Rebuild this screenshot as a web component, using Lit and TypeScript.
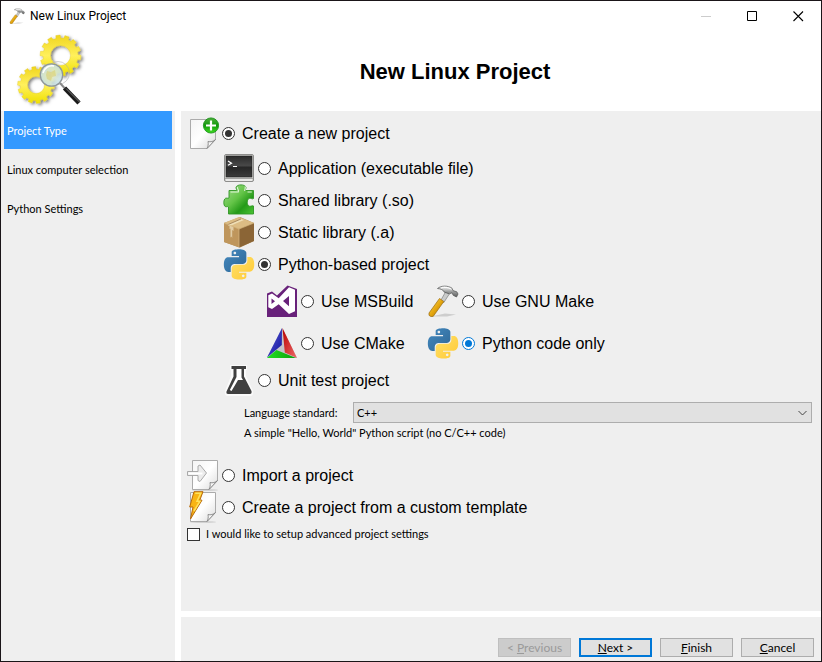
import { LitElement, html, css, svg, nothing } from "lit";
import { customElement, state } from "lit/decorators.js";

type Option = { value: string; label: string; icon: string };

const KINDS: Option[] = [
  { value: "app", label: "Application (executable file)", icon: "terminal" },
  { value: "so", label: "Shared library (.so)", icon: "puzzle" },
  { value: "a", label: "Static library (.a)", icon: "box" },
  { value: "python", label: "Python-based project", icon: "python" },
];

const BUILDS: Option[] = [
  { value: "msbuild", label: "Use MSBuild", icon: "vs" },
  { value: "make", label: "Use GNU Make", icon: "hammer" },
  { value: "cmake", label: "Use CMake", icon: "cmake" },
  { value: "none", label: "Python code only", icon: "python" },
];

const PAGES = ["Project Type", "Linux computer selection", "Python Settings"];

/* Outline of a toothed wheel around (cx, cy). */
function gear(cx: number, cy: number, outer: number, root: number, hole: number, teeth: number) {
  const step = (Math.PI * 2) / teeth;
  const pts: string[] = [];
  for (let i = 0; i < teeth; i++) {
    const a = i * step + 0.1;
    for (const [r, o] of [[root, -0.32], [outer, -0.24], [outer, 0.24], [root, 0.32]]) {
      pts.push(`${(cx + r * Math.cos(a + o * step)).toFixed(2)} ${(cy + r * Math.sin(a + o * step)).toFixed(2)}`);
    }
  }
  return `M${pts.join("L")}ZM${cx - hole} ${cy}a${hole} ${hole} 0 1 0 ${hole * 2} 0a${hole} ${hole} 0 1 0 ${-hole * 2} 0Z`;
}

const SNAKE =
  "M14.25.18l.9.2.73.26.59.3.45.32.34.34.25.34.16.33.1.3.04.26.02.2-.01.13V8.5l-.05.63-.13.55-.21.46-.26.38-.3.31-.33.25-.35.19-.35.14-.33.1-.3.07-.26.04-.21.02H8.77l-.69.05-.59.14-.5.22-.41.27-.33.32-.27.35-.2.36-.15.37-.1.35-.07.32-.04.27-.02.21v3.06H3.17l-.21-.03-.28-.07-.32-.12-.35-.18-.36-.26-.36-.36-.35-.46-.32-.59-.28-.73-.21-.88-.14-1.05-.05-1.23.06-1.22.16-1.04.24-.87.32-.71.36-.57.4-.44.42-.33.42-.24.4-.16.36-.1.32-.05.24-.01h.16l.06.01h8.16v-.83H6.18l-.01-2.75-.02-.37.05-.34.11-.31.17-.28.25-.26.31-.23.38-.2.44-.18.51-.15.58-.12.64-.1.71-.06.77-.04.84-.02 1.27.05zm-6.3 1.98l-.23.33-.08.41.08.41.23.34.33.22.41.09.41-.09.33-.22.23-.34.08-.41-.08-.41-.23-.33-.33-.22-.41-.09-.41.09z";

const sheet = (x: number) => svg`
  <defs><linearGradient id="paper" x1="0" y1="0" x2="1" y2="1">
    <stop offset="0" stop-color="#f4f4f4"/><stop offset=".5" stop-color="#fff"/><stop offset="1" stop-color="#dcdcdc"/>
  </linearGradient></defs>
  <ellipse cx="${x + 13}" cy="31" rx="13" ry="1" fill="#000" opacity=".12"/>
  <path d="M${x + 0.5} 1.5h25v20l-8.500 9h-16.500z" fill="url(#paper)" stroke="#ababab"/>
  <path d="M${x + 25.5} 21.500l-8.500 9c1.200-2.200 1.500-4.500 1-7c2.500.8 5.500 0 7.500-2z" fill="#f6f6f6" stroke="#858585" stroke-width=".9"/>`;

const ICONS: Record<string, unknown> = {
  create: svg`
    <defs><linearGradient id="paper0" x1="0" y1="0" x2="1" y2="1"><stop offset="0" stop-color="#f4f4f4"/><stop offset=".5" stop-color="#fff"/><stop offset="1" stop-color="#d8d8d8"/></linearGradient>
    <linearGradient id="plus" x1="0" y1="0" x2="0" y2="1"><stop offset="0" stop-color="#4fae3c"/><stop offset=".5" stop-color="#119a0b"/><stop offset="1" stop-color="#3fdc1f"/></linearGradient></defs>
    <path d="M3.500 2.500h25v20l-8.500 9h-16.500z" fill="url(#paper0)" stroke="#ababab"/>
    <path d="M28.500 22.500l-8.500 9c1.200-2.200 1.500-4.500 1-7c2.500.8 5.500 0 7.500-2z" fill="#f6f6f6" stroke="#858585" stroke-width=".9"/>
    <circle cx="24" cy="8.500" r="7.600" fill="url(#plus)" stroke="#0c8a0c" stroke-width=".8"/>
    <path d="M24 3.500v10M19 8.500h10" stroke="#fff" stroke-width="2.200"/>`,
  terminal: svg`<defs><linearGradient id="scr" x1="0" y1="0" x2="0" y2="1"><stop offset="0" stop-color="#2b2b2b"/><stop offset=".45" stop-color="#484848"/><stop offset=".55" stop-color="#272727"/><stop offset="1" stop-color="#3c3c3c"/></linearGradient></defs>
    <rect x="1.500" y="2.500" width="29" height="27" rx="1.500" fill="#d5d5d2" stroke="#8d8d8b"/>
    <path d="M2 26.500h28" stroke="#a6a6a4"/><path d="M3 28h26" stroke="#fff"/>
    <rect x="3" y="4" width="26" height="21" fill="url(#scr)" stroke="#1e1e1e" stroke-width=".6"/>
    <path d="M5 9l3.500 2.200L5 13.300M10 14.500h4" fill="none" stroke="#fff" stroke-width="1.200"/>`,
  puzzle: svg`<defs><linearGradient id="puz" x1="0" y1="0" x2="1" y2="1"><stop offset="0" stop-color="#a6dd90"/><stop offset=".45" stop-color="#63c447"/><stop offset=".7" stop-color="#249a18"/><stop offset="1" stop-color="#4cc535"/></linearGradient></defs>
    <path d="M6 6.500h7.500c.8-1-.8-2-.5-3c.5-3.500 9.500-3.500 10 0c.3 1-1.300 2-.5 3H30.500v8c-1 1-2.500-.5-4-.2c-3 .7-3 7.200 0 7.900c1.500.3 3-1 4-.2v8H5.500V23c-1-1-2 .2-3.200-.4c-2-1.200-2-7 .2-8.300c1.300-.6 2.500.5 3.500-.5z" fill="url(#puz)" stroke="#2f9524" stroke-width=".9"/>
    <path d="M7.500 8h7.800c1-2-1.300-3-.8-4.800M24.500 8h4.300M22 2.500c1 2-.5 2.700-.3 4.500" fill="none" stroke="#e3f7dc" stroke-width="1.100"/>`,
  box: svg`<path d="M1 7L17 1l14 6v18l-14 6.500L1 26z" fill="#b08a54"/>
    <path d="M1 7l15-6 15 6-15 6z" fill="#dcbc84"/>
    <path d="M1 7l15 6v18.500L1 26z" fill="#bf965c"/><path d="M31 7l-15 6v18.500L31 25z" fill="#8b6536"/>
    <path d="M4 9l14-6 3 1-14 6z" fill="#efdeb5"/><path d="M4 9l14-6" stroke="#927048" stroke-width=".7"/>
    <path d="M6.500 9.500v3.500l1-.5v9l1-1 .7 1.500v-8l1.300 1v-4.300z" fill="#e6d6b2" opacity=".85"/>
    <path d="M16 13v18M1 7l15 6 15-6" stroke="#d9b981" stroke-width=".7" fill="none"/>`,
  python: svg`<defs><linearGradient id="pyb" x1="0" y1="0" x2="1" y2="1"><stop offset="0" stop-color="#4389c0"/><stop offset="1" stop-color="#2f6795"/></linearGradient>
    <linearGradient id="pyy" x1="1" y1="1" x2="0" y2="0"><stop offset="0" stop-color="#ffe16a"/><stop offset="1" stop-color="#ffc934"/></linearGradient></defs>
    <g transform="translate(.9 1.300) scale(1.260)"><path d="${SNAKE}" fill="url(#pyb)"/><g transform="rotate(180 12 12)"><path d="${SNAKE}" fill="url(#pyy)"/></g></g>`,
  vs: svg`<path d="M1 8.500l5-2 5 4L21.500 0.500 31 4v28H1z" fill="#68217a"/>
    <path fill-rule="evenodd" d="M23 2.200l6 2.600v21.400l-6 2.800-10.300-9.800L6 24l-3.700-1.800V10.300L6 8.500l6.700 4.700zM23 11l-6 5.100 6 5.200zM5.500 13.500v5.400l3.500-2.700z" fill="#fff"/>`,
  hammer: svg`<defs><linearGradient id="hnd" x1="0" y1="0" x2="1" y2="1"><stop offset="0" stop-color="#ffe566"/><stop offset=".5" stop-color="#e5a70f"/><stop offset="1" stop-color="#a06c00"/></linearGradient>
    <linearGradient id="stl" x1="0" y1="0" x2="0" y2="1"><stop offset="0" stop-color="#fff"/><stop offset=".5" stop-color="#9d9f9f"/><stop offset="1" stop-color="#5a5c5c"/></linearGradient></defs>
    <path d="M4 31.500l14-3 11 1-9 2z" fill="#000" opacity=".14"/>
    <path d="M18.500 7l3.700 2.200-5.500 8.500-3-2.200z" fill="#c9cbcb" stroke="#6e7070" stroke-width=".6"/>
    <path d="M12.500 13.500l4.300 3L6.300 31.300Q4 32.500 2 30.300V28z" fill="url(#hnd)" stroke="#99690c" stroke-width=".7"/>
    <path d="M10.500 3.500C14 .4 21 .4 25 3.200l1 2.400 3.800 1.200 1.200 2.200-1.500 3-3.300-1.700-1.200-2.500-2.500 1-5.200-1.600C16.500 4.800 13.500 3.800 10.500 3.500z" fill="url(#stl)" stroke="#505252" stroke-width=".7"/>
    <path d="M14 3c3-1.300 7-.7 10.500 1.200" fill="none" stroke="#fff" stroke-width="1"/>`,
  cmake: svg`<defs><linearGradient id="cb" x1="0" y1="0" x2="1" y2="1"><stop offset="0" stop-color="#5c60d8"/><stop offset="1" stop-color="#10109c"/></linearGradient>
    <linearGradient id="cr" x1="0" y1="0" x2="1" y2="1"><stop offset="0" stop-color="#b80000"/><stop offset="1" stop-color="#ef6a6a"/></linearGradient>
    <linearGradient id="cg"><stop offset="0" stop-color="#21e021"/><stop offset="1" stop-color="#0c9d0c"/></linearGradient></defs>
    <path d="M16.300 1L31 31 1 31z" fill="#c4c4ca"/><path d="M16 1L1 30.500l14.800-12.500z" fill="url(#cb)"/>
    <path d="M16.500 1l2.300 24.500L31 31z" fill="url(#cr)"/><path d="M1 31l9.500-8L30 31z" fill="url(#cg)"/>`,
  flask: svg`<path d="M7 1h17v5h-1v6l7 15q1 5-3 5H5q-4 0-3-5l6-15V6H7z" fill="#fafafa"/>
    <path d="M8.500 2H23v3h-2v7.500l7.500 14.500Q29 30 27 30H5q-2 0-1.500-2.500L10.500 12.500V5h-2z" fill="#404040"/>
    <path d="M13.500 5h5v8.500l1.500 2.500h-5l-3.500 6-3 5-1.700-1L13.500 13z" fill="#fff"/>`,
  import: svg`${sheet(5)}<path d="M.5 12.500h10.500v-5.500l2-1 6.500 8-6.500 8.500-2-1v-5H.5z" fill="#ececec" stroke="#a2a2a2" stroke-width=".9"/>
    <path d="M1.500 14.500h14" stroke="#fff" stroke-width="2"/>`,
  bolt: svg`${sheet(3)}<path d="M7 .7h9l-3.200 8.500H15L3.500 28l2.500-12H2.700z" fill="#f8b414" stroke="#b6690c" stroke-width="1"/>
    <path d="M8.200 2.200h5.500l-3.700 8h3L7 20" fill="none" stroke="#ffe25c" stroke-width="1.500"/>`,
};

@customElement("app-root")
export class AppRoot extends LitElement {
  @state() private source = "new";
  @state() private kind = "python";
  @state() private build = "none";

  static styles = css`
    :host { display: block; font: 16px/20px "Liberation Sans", Arial, sans-serif; color: #000; }
    * { box-sizing: border-box; }
    .window { min-height: 100vh; border: 1px solid #1a1518; background: #fff; display: flex; flex-direction: column; }
    .titlebar { display: flex; align-items: center; height: 30px; padding-left: 8px; font: 12px/16px Roboto, "Open Sans", sans-serif; }
    .titlebar svg { width: 16px; height: 16px; margin-right: 5px; }
    .caption { flex: 1; }
    .sysbtn { width: 46px; height: 30px; border: 0; padding: 0; background: none; display: grid; place-items: center; }
    .sysbtn svg { width: 11px; height: 11px; margin: 0; }
    .header { display: flex; align-items: center; height: 80px; padding-left: 12px; }
    .logo { width: 76px; height: 80px; flex: none; }
    h1 { flex: 1; margin: 0; padding-top: 2px; text-align: center; font-size: 22px; line-height: 26px; }
    .body { flex: 1; display: flex; gap: 6px; }
    .pages { width: 174px; background: #efefef; padding: 0 3px; display: flex; flex-direction: column; gap: 1px; }
    .page { height: 38px; padding: 2px 3px 0; display: flex; align-items: center; color: #000; text-decoration: none; }
    .page.current { background: #39f; color: #fff; }
    .small, .page, .push { font-family: Lato, "Liberation Sans", sans-serif; font-size: 11px; line-height: 16px; }
    .right { flex: 1; display: flex; flex-direction: column; gap: 6px; }
    .content { flex: 1; background: #efefef; padding: 6px 9px 0 6px; }
    .option { display: flex; align-items: center; gap: 3px; height: 32px; width: max-content; }
    .option svg { width: 32px; height: 32px; flex: none; }
    .option span { margin-left: 4px; padding-top: 2px; }
    .kinds { padding: 3px 0 0 36px; }
    .builds { display: grid; grid-template-columns: 161px max-content; row-gap: 10px; padding: 5px 0 5px 43px; }
    input { appearance: none; margin: 0; width: 13px; height: 13px; background: #fff; border: 1px solid #333; flex: none; display: grid; place-items: center; }
    input[type="radio"] { border-radius: 50%; }
    input[type="radio"]:checked::before { content: ""; width: 7px; height: 7px; border-radius: 50%; background: #333; }
    .accent input:checked { border-color: #0078d7; }
    .accent input:checked::before { background: #0078d7; }
    .standard { display: flex; align-items: center; padding: 6px 0 0 57px; }
    .standard label { width: 109px; }
    .combo { flex: 1; display: grid; align-items: center; }
    .combo > * { grid-area: 1 / 1; }
    select { appearance: none; width: 100%; height: 21px; margin: 0; padding: 0 3px; border: 1px solid #adadad; border-radius: 0; background: #e1e1e1; color: #000; }
    .combo svg { width: 9px; height: 6px; margin-right: 5px; justify-self: end; pointer-events: none; }
    .note { margin: 0; padding: 2px 0 18px 57px; }
    .advanced { display: flex; align-items: center; gap: 6px; padding-top: 3px; width: max-content; }
    .footer { height: 44px; background: #efefef; padding: 21px 7px 4px; display: flex; justify-content: flex-end; gap: 8px; }
    .push { width: 73px; height: 19px; padding: 0; border: 1px solid #adadad; background: #e1e1e1; color: #000; font-size: 12px; }
    .push.primary { border: 2px solid #0078d7; }
    .push:disabled { background: #ccc; border-color: #bfbfbf; color: #9a9a9a; }
  `;

  private option(group: "source" | "kind" | "build", o: Option) {
    return html`<label class="option">
      <svg viewBox="0 0 32 32" aria-hidden="true">${ICONS[o.icon]}</svg>
      <input type="radio" name=${group} .checked=${this[group] === o.value} @change=${() => (this[group] = o.value)} />
      <span>${o.label}</span>
    </label>`;
  }

  render() {
    return html`<div class="window">
      <div class="titlebar">
        <svg viewBox="0 0 32 32" aria-hidden="true">${ICONS.hammer}</svg>
        <span class="caption">New Linux Project</span>
        <button class="sysbtn" aria-label="Minimize" disabled><svg viewBox="0 0 11 11"><path d="M0 5.500h10" stroke="#ccc"/></svg></button>
        <button class="sysbtn" aria-label="Maximize"><svg viewBox="0 0 11 11"><path d="M.5 .5h9v9h-9z" stroke="#000" fill="none"/></svg></button>
        <button class="sysbtn" aria-label="Close"><svg viewBox="0 0 11 11"><path d="M.5 .5l9.500 9.500M10 .5l-9.500 9.500" stroke="#000" stroke-width="1.100"/></svg></button>
      </div>
      <header class="header">
        <svg class="logo" viewBox="13 31 76 80" aria-hidden="true">
          <defs>
            <linearGradient id="gold" x1="0" y1="0" x2="0" y2="1"><stop offset="0" stop-color="#f0d51c"/><stop offset=".5" stop-color="#fff05c"/><stop offset="1" stop-color="#efe000"/></linearGradient>
            <radialGradient id="lens"><stop offset="0" stop-color="#e9eec4"/><stop offset="1" stop-color="#c4e0ec"/></radialGradient>
            <filter id="soft" x="-30%" y="-30%" width="160%" height="160%"><feDropShadow dx="2" dy="1.500" stdDeviation="1.500" flood-color="#000" flood-opacity=".5"/></filter>
          </defs>
          <g filter="url(#soft)" fill="url(#gold)" fill-rule="evenodd" stroke="#d8bf22" stroke-width=".3">
            <path d=${gear(60.5, 55.5, 20.5, 17.5, 10, 14)} />
            <path d=${gear(36, 85, 18.5, 15.8, 8.5, 14)} />
          </g>
          <circle cx="58" cy="73" r="11.500" fill="none" stroke="#aaa" stroke-width=".8" opacity=".7"/>
          <path d="M60 83l4.500 5" stroke="#888" stroke-width="2"/>
          <path d="M64.500 88L79 103" stroke="#1b1b1b" stroke-width="4.500"/>
          <path d="M66 88.500L79.500 102" stroke="#777" stroke-width="1"/>
          <circle cx="51.500" cy="75" r="11.200" fill="url(#lens)" fill-opacity=".88" stroke="#8f979b" stroke-width="1.300"/>
          <path d="M47 71l4 1 4-2 1 6-4 1-1 4-4-2-1-4z" fill="#d9cf73" opacity=".6"/>
          <path d="M43 73c1-5 6-8 11-7" stroke="#fff" stroke-width="1.500" fill="none"/>
        </svg>
        <h1>New Linux Project</h1>
      </header>
      <div class="body">
        <nav class="pages">
          ${PAGES.map((p, i) => html`<a class="page ${i === 0 ? "current" : ""}" href="#" aria-current=${i === 0 ? "page" : nothing}>${p}</a>`)}
        </nav>
        <div class="right">
          <main class="content">
            ${this.option("source", { value: "new", label: "Create a new project", icon: "create" })}
            <div class="kinds">
              ${KINDS.map((k) => this.option("kind", k))}
              <div class="builds accent">${BUILDS.map((b) => this.option("build", b))}</div>
              ${this.option("kind", { value: "test", label: "Unit test project", icon: "flask" })}
            </div>
            <div class="standard small">
              <label for="std">Language standard:</label>
              <div class="combo">
                <select id="std" class="small"><option>C++</option></select>
                <svg viewBox="0 0 9 6" aria-hidden="true"><path d="M.5 1l4 4 4-4" fill="none" stroke="#444"/></svg>
              </div>
            </div>
            <p class="note small">A simple "Hello, World" Python script (no C/C++ code)</p>
            ${this.option("source", { value: "import", label: "Import a project", icon: "import" })}
            ${this.option("source", { value: "template", label: "Create a project from a custom template", icon: "bolt" })}
            <label class="advanced small"><input type="checkbox" />I would like to setup advanced project settings</label>
          </main>
          <footer class="footer">
            <button class="push" disabled>&lt; <u>P</u>revious</button>
            <button class="push primary"><u>N</u>ext &gt;</button>
            <button class="push"><u>F</u>inish</button>
            <button class="push"><u>C</u>ancel</button>
          </footer>
        </div>
      </div>
    </div>`;
  }
}
